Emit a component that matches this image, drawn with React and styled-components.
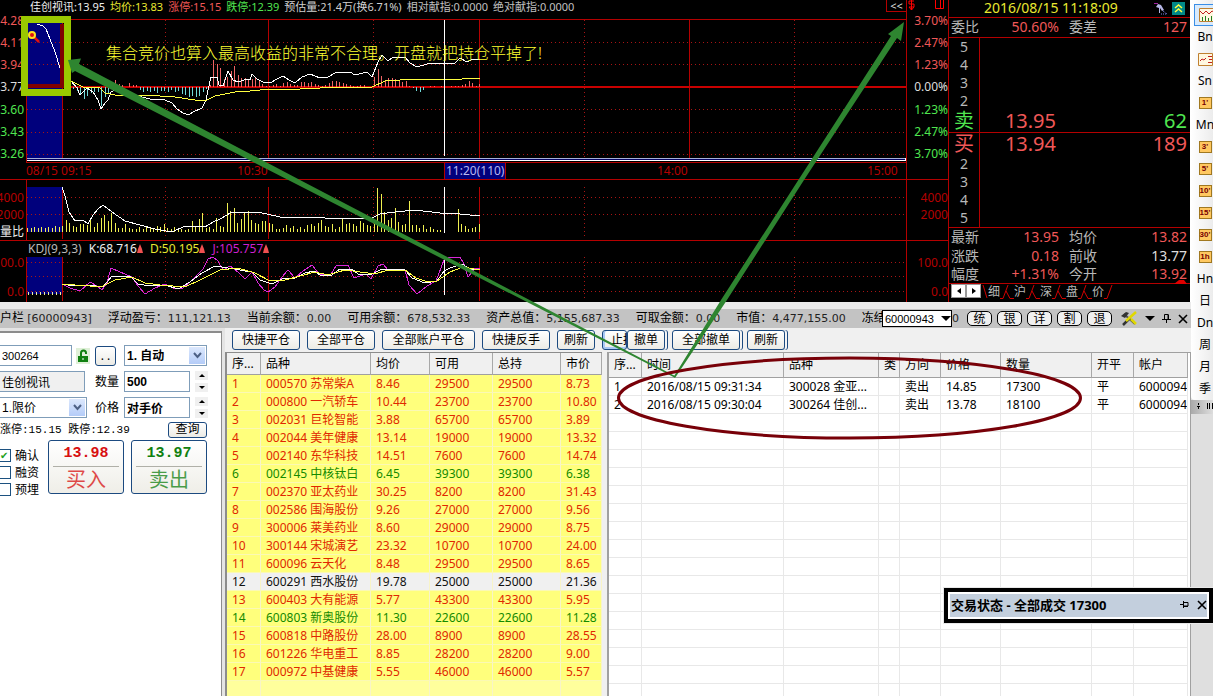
import React, { useState } from "react";
import styled, { createGlobalStyle } from "styled-components";

const GlobalStyle = createGlobalStyle`
  * { box-sizing: border-box; }
  body {
    margin: 0;
    overflow: hidden;
    background: #f0f0f0;
    font-family: "Noto Sans", "Noto Sans CJK SC", sans-serif;
    font-size: 12px;
    line-height: 16px;
    color: #000;
  }
  button, input, select {
    font-family: inherit;
    font-size: 12px;
    line-height: 16px;
    margin: 0;
    padding: 0;
    color: inherit;
    border-radius: 0;
  }
`;

const RED = "#b40000";
const PINK = "#f05858";
const GREEN = "#50e650";
const GREY = "#b8b8b8";

const Page = styled.div`
  position: relative;
  display: flex;
  height: 100vh;
  overflow: hidden;
`;
const Main = styled.main`
  flex: 1;
  min-width: 0;
  display: flex;
  flex-direction: column;
`;
const Top = styled.section`
  display: flex;
  height: 302px;
  flex: none;
  background: #000;
  border-right: 1px solid #fff;
`;

/* ---------- chart ---------- */
const Chart = styled.div`
  flex: 1;
  min-width: 0;
  display: flex;
  border-right: 1px solid ${RED};
`;
const Axis = styled.div`
  width: ${(p) => (p.$right ? 42 : 26)}px;
  flex: none;
  display: flex;
  flex-direction: column;
  border-left: ${(p) => (p.$right ? `1px solid ${RED}` : "none")};
`;
const AxisBlock = styled.div`
  height: ${(p) => p.$h}px;
  padding: ${(p) => p.$pad || "0"};
  border-bottom: ${(p) => (p.$last ? "none" : `1px solid ${RED}`)};
  display: flex;
  flex-direction: column;
  justify-content: ${(p) => (p.$spread ? "space-between" : "flex-start")};
  gap: ${(p) => p.$gap || 0}px;
  position: relative;
`;
const Tick = styled.span`
  display: flex;
  justify-content: flex-end;
  height: 16px;
  padding-right: ${(p) => (p.$right ? 0 : 2)}px;
  overflow: hidden;
  white-space: nowrap;
  color: ${(p) => p.$c || RED};
`;
const AxisTools = styled.svg`
  position: absolute;
  left: 0;
  top: 0;
`;
const Plot = styled.div`
  flex: 1;
  min-width: 0;
  display: flex;
  flex-direction: column;
`;
const PlotHead = styled.div`
  height: 19px;
  padding-left: 4px;
  display: flex;
  gap: 5px;
  font-size: 11px;
  line-height: 13px;
  white-space: nowrap;
`;
const Tint = styled.span`
  color: ${(p) => p.$c};
`;
const Collapse = styled.button`
  margin-left: auto;
  width: 20px;
  height: 12px;
  border: solid ${RED};
  border-width: 0 0 1px 1px;
  background: #000;
  color: #ddd;
  font-size: 11px;
  line-height: 11px;
`;
const Svg = styled.svg`
  display: block;
  width: 100%;
  height: ${(p) => p.$h}px;
  shape-rendering: crispEdges;
  fill: none;
`;
const TimeRow = styled.div`
  height: 17px;
  border-bottom: 1px solid ${RED};
  display: grid;
  grid-template-columns: 211fr 207fr 213fr 210fr 39fr;
  color: ${RED};
  white-space: nowrap;
`;
const Cursor = styled.span`
  justify-self: start;
  padding: 0 1px;
  background: #00007c;
  color: #b8b8f0;
  border: solid ${RED};
  border-width: 0 1px;
`;
const KdjHead = styled.div`
  height: 17px;
  border-top: 1px solid ${RED};
  padding-left: 2px;
  display: flex;
  gap: 7px;
  white-space: nowrap;
`;

/* ---------- quote ---------- */
const Quote = styled.aside`
  width: 241px;
  flex: none;
  color: ${GREY};
  font-size: 14px;
  line-height: 18px;
`;
const Clock = styled.div`
  height: 18px;
  padding-left: 35px;
  padding-right: 5px;
  border-bottom: 1px solid ${RED};
  display: flex;
  justify-content: space-between;
  color: #e8e830;
  line-height: 16px;
`;
const QuoteRow = styled.div`
  display: grid;
  grid-template-columns: 28px 80px 10px 28px 1fr;
  height: ${(p) => p.$h || 18}px;
  padding: 0 3px 0 2px;
  border-bottom: ${(p) => (p.$line ? `1px solid ${RED}` : "none")};
`;
const Num = styled.span`
  color: ${(p) => p.$c};
  text-align: right;
`;
const Book = styled.div`
  height: 95px;
  border-bottom: 1px solid ${RED};
  display: flex;
  flex-direction: column;
`;
const Level = styled.div`
  display: flex;
  flex: none;
  height: ${(p) => (p.$big ? 22 : 18)}px;
  line-height: ${(p) => (p.$big ? 22 : 18)}px;
  font-size: ${(p) => (p.$big ? 20 : 14)}px;
  padding-right: 3px;
`;
const LevelName = styled.span`
  width: 31px;
  border-right: 1px solid ${RED};
  text-align: center;
  color: ${(p) => p.$c || GREY};
`;
const LevelPrice = styled.span`
  width: 76px;
  text-align: right;
  color: ${PINK};
`;
const LevelVol = styled.span`
  margin-left: auto;
  color: ${(p) => p.$c};
`;
const Tabs = styled.div`
  display: flex;
  height: 17px;
  border-top: 1px solid ${RED};
  padding-left: 2px;
`;
const TabArrow = styled.button`
  display: flex;
  align-items: center;
  justify-content: center;
  width: 15px;
  height: 14px;
  border: 1px solid #999;
  background: #fff;
`;
const Tab = styled.button`
  display: flex;
  border: 0;
  background: none;
  color: ${GREY};
  line-height: 15px;
`;

/* ---------- side bar ---------- */
const Side = styled.nav`
  width: 22px;
  flex: none;
  overflow: hidden;
  background: #dfdfdf;
`;
const SideList = styled.div`
  background: linear-gradient(90deg, #fff, #ececec);
  padding-top: 4px;
  border-radius: 0 0 0 4px;
`;
const SideItem = styled.button`
  display: flex;
  align-items: center;
  justify-content: center;
  width: 28px;
  height: 22px;
  border: ${(p) => (p.$on ? "1px solid #3a8ee6" : "0")};
  background: ${(p) => (p.$on ? "#d8eafc" : "none")};
  margin-left: ${(p) => (p.$on ? 3 : 0)}px;
  font-size: 12px;
`;
const Period = styled.span`
  width: 13px;
  height: 12px;
  border: 1px solid #a07820;
  background: #ffc860;
  color: #700;
  font-family: "Liberation Sans", sans-serif;
  font-size: 8px;
  line-height: 10px;
  font-weight: bold;
  text-align: center;
`;
const Grip = styled.div`
  height: 14px;
  padding-left: 6px;
  background: linear-gradient(90deg, #aaa, #ddd);
  overflow: hidden;
`;

/* ---------- status bar ---------- */
const Status = styled.div`
  flex: none;
  display: flex;
  align-items: center;
  height: 26px;
  border-top: 7px solid #ebebeb;
  background: #c3c3c3;
  white-space: nowrap;
  padding-right: 3px;
`;
const Figures = styled.div`
  flex: 1;
  min-width: 0;
  overflow: hidden;
  display: flex;
  gap: 16px;
`;
const Fig = styled.span`
  font-family: "DejaVu Sans", sans-serif;
  font-size: 11px;
  color: #222;
`;
const AccountBox = styled.label`
  display: flex;
  width: 70px;
  height: 17px;
  border: 1px solid #000;
  background: #fff;
  align-items: center;
  margin-top: -1px;
`;
const PlainSelect = styled.select`
  appearance: none;
  flex: 1;
  min-width: 0;
  height: 100%;
  border: 0;
  background: none;
  padding-left: ${(p) => p.$pad || 2}px;
  font-family: "Liberation Sans", "Noto Sans CJK SC", sans-serif;
  font-size: ${(p) => p.$size || 12}px;
  font-weight: ${(p) => (p.$bold ? "bold" : "normal")};
`;
const Pills = styled.div`
  display: flex;
  gap: 5px;
  margin: 0 9px 0 8px;
`;
const Pill = styled.button`
  width: 25px;
  height: 15px;
  border: 1px solid #000;
  border-radius: 5px;
  background: #f0f0f0;
  line-height: 12px;
`;
const IconBtn = styled.button`
  display: flex;
  border: 0;
  background: none;
`;
const IconRow = styled.div`
  display: flex;
  align-items: center;
  gap: ${(p) => p.$gap || 8}px;
`;

/* ---------- workspace ---------- */
const Work = styled.section`
  flex: 1;
  min-height: 0;
  display: flex;
`;
const FormWrap = styled.form`
  width: 225px;
  flex: none;
  padding: 3px 3px 0 0;
  background: #e4e4e4;
`;
const FormPane = styled.div`
  height: 100%;
  background: #fff;
  border: solid #8c8c8c;
  border-width: 2px 1px 0 0;
  padding-top: 12px;
  display: flex;
  flex-direction: column;
  gap: 5px;
`;
const FormRow = styled.div`
  display: grid;
  grid-template-columns: 90px 24px 84px;
  gap: 5px;
  height: 21px;
  align-items: center;
`;
const Cell = styled.div`
  display: flex;
  align-items: center;
  gap: ${(p) => p.$gap || 4}px;
`;
const Field = styled.input`
  width: ${(p) => p.$w}px;
  height: 21px;
  border: 1px solid #7f9db9;
  border-left-width: ${(p) => (p.$cut ? 0 : 1)}px;
  background: ${(p) => (p.readOnly ? "#f0f0f0" : "#fff")};
  padding-left: 2px;
  font-family: "Liberation Sans", "Noto Sans CJK SC", sans-serif;
  font-size: ${(p) => p.$size || 12}px;
  font-weight: ${(p) => (p.$bold ? "bold" : "normal")};
`;
const ComboBox = styled.div`
  display: flex;
  align-items: center;
  width: ${(p) => p.$w}px;
  height: 21px;
  border: 1px solid #7f9db9;
  border-left-width: ${(p) => (p.$cut ? 0 : 1)}px;
  padding-right: 1px;
  background: #fff;
`;
const ComboArrow = styled.span`
  display: flex;
  align-items: center;
  justify-content: center;
  width: 16px;
  height: 17px;
  background: linear-gradient(#dce8fd, #b4ccf8);
  pointer-events: none;
`;
const Spinner = styled.div`
  display: flex;
  flex-direction: column;
  gap: 3px;
`;
const SpinBtn = styled.button`
  display: flex;
  align-items: center;
  justify-content: center;
  width: 13px;
  height: 9px;
  border: 0;
  background: #f0f0f0;
`;
const XpButton = styled.button`
  height: ${(p) => p.$h || 20}px;
  width: ${(p) => p.$w}px;
  flex: none;
  border: 1px solid #1c4a80;
  border-radius: 3px;
  background: linear-gradient(#fff, #ecebe5);
  line-height: 14px;
  white-space: nowrap;
  overflow: hidden;
  box-shadow: ${(p) =>
    p.$double ? "2px 0 0 #f4f4f4, 3px 0 0 #1c4a80" : p.$hot ? "inset 2px 0 0 #a8c8f4, inset 0 -2px 0 #a8c8f4" : "none"};
  text-align: ${(p) => (p.$hot ? "left" : "center")};
  padding-left: ${(p) => (p.$hot ? 8 : 0)}px;
`;
const LockBtn = styled.button`
  display: flex;
  width: 14px;
  height: 16px;
  border: 0;
  background: #dff0d8;
`;
const LimitRow = styled.div`
  display: flex;
  justify-content: space-between;
  align-items: center;
  width: 207px;
  height: 14px;
  white-space: nowrap;
  font-family: "Liberation Mono", "Noto Sans CJK SC", monospace;
  font-size: 11px;
`;
const DealRow = styled.div`
  display: flex;
  gap: 7px;
  margin-top: -2px;
`;
const Checks = styled.div`
  width: 41px;
  padding-top: 7px;
`;
const Check = styled.label`
  display: flex;
  align-items: center;
  gap: 4px;
  height: 17px;
  white-space: nowrap;
`;
const Tickbox = styled.input`
  appearance: none;
  width: 11px;
  height: 13px;
  border: 1px solid #1c5180;
  border-left: 0;
  background: #fff;
  &:checked::before {
    content: "✔";
    display: block;
    color: #21a121;
    font-size: 10px;
    line-height: 11px;
  }
`;
const Deal = styled.button`
  width: 76px;
  height: 54px;
  border: 1px solid #1c4a80;
  border-radius: 3px;
  background: linear-gradient(#fff, #efeee8);
  color: ${(p) => p.$c};
  padding: 0 4px;
`;
const DealPrice = styled.div`
  height: 26px;
  border-bottom: 1px solid #b0b0a8;
  font: bold 15px/26px "Liberation Mono", monospace;
`;
const DealName = styled.div`
  font-size: 20px;
  line-height: 26px;
  opacity: 0.75;
`;

const Right = styled.div`
  flex: 1;
  min-width: 0;
  display: flex;
  flex-direction: column;
  background: #f0f0f0;
`;
const Toolbar = styled.div`
  display: flex;
  flex: none;
  align-items: center;
  gap: 7px;
  height: 24px;
  padding-left: 7px;
`;
const Cancels = styled.div`
  display: flex;
  gap: 7px;
`;
const Joined = styled.div`
  display: flex;
`;
const Tables = styled.div`
  flex: 1;
  min-height: 0;
  display: flex;
`;
const HoldPane = styled.div`
  width: 377px;
  flex: none;
  overflow: hidden;
  border: solid #8c8c8c;
  border-width: 1px 0 0 2px;
  background: #ffff9c;
`;
const TradePane = styled.div`
  flex: 1;
  min-width: 0;
  overflow: hidden;
  margin-left: 5px;
  border: solid #a0a0a0;
  border-width: 1px 1px 0 2px;
  background: #fff;
  padding-right: 2px;
`;
const Table = styled.table`
  width: 100%;
  table-layout: fixed;
  border-spacing: 0;
  border-collapse: separate;
  text-align: left;
`;
const Th = styled.th`
  width: ${(p) => (p.$w ? `${p.$w}px` : "auto")};
  height: ${(p) => p.$h}px;
  padding: 0 0 0 5px;
  font-weight: normal;
  line-height: 18px;
  background: #f0f0f0;
  border-right: 1px solid #a8a8a8;
  border-bottom: 1px solid #a0a0a0;
  white-space: nowrap;
`;
const HoldTr = styled.tr`
  color: ${(p) => p.$c};
  background: ${(p) => p.$bg};
`;
const Td = styled.td`
  height: 18px;
  padding: 0 0 0 5px;
  line-height: 17px;
  white-space: nowrap;
  overflow: hidden;
  border-right: 1px solid ${(p) => (p.$light ? "#e8e8e8" : "#f8f4c8")};
  border-bottom: 1px solid ${(p) => (p.$light ? "#e8e8e8" : "#fbf9b4")};
`;

/* ---------- overlays ---------- */
const Marks = styled.svg`
  position: absolute;
  left: 0;
  top: 0;
  pointer-events: none;
`;
const Note = styled.div`
  position: absolute;
  left: 106px;
  top: 42px;
  color: #ffff30;
  font-size: 16px;
  font-weight: 300;
  line-height: 22px;
  white-space: nowrap;
`;
const Popup = styled.div`
  position: absolute;
  right: 0;
  top: 588px;
  width: 269px;
  height: 35px;
  border: 4px solid #000;
  box-shadow: 0 1px 0 #888;
  outline: 1px solid #e8e8e8;
  background: #fff;
  padding: 2px;
`;
const PopupBar = styled.div`
  height: 100%;
  padding: 0 0 2px 1px;
  display: flex;
  align-items: center;
  justify-content: space-between;
  background: #c3cfdd;
  font-size: 13px;
  font-weight: bold;
`;

const pct = [
  ["3.70%", PINK],
  ["2.47%", PINK],
  ["1.23%", PINK],
  ["0.00%", "#ddd"],
  ["1.23%", GREEN],
  ["2.47%", GREEN],
  ["3.70%", GREEN],
];
const prices = ["4.28", "4.11", "3.94", "3.77", "3.60", "3.43", "3.26"];

const dotted = [165.5, 373.5, 584.5, 794.5];
const solid = [62.5, 268.5, 479.5];

// deviation bars around the zero line, one every 3.5px from x = 73
const bars = [
  -2, -4, -8, -12, -9, -6, -5, -5, -19, -10, -7, 4, 7, 3, 2, 0, 4, 2, 2, -3, -5, -4, -5, -4, -6,
  -4, -4, -5, -3, -5, -4, -7, -8, -10, -9, -10, -9, -5, -2, 2, 27, 23, 19, 8, 10, 16, 21, 12, 9, 9,
  7, 8, 10, 6, 3, 1, 1, 2, 3, 1, 4, 5, 3, 2, 2, 5, 5, 4, 5, 3, 2, 1, 2, 4, 6, 6, 5, 4, 3, 2, 1, 1, 2,
  2, 0, -1, 10, 18, 11, 7, 9, 9, 8, 7, 5, 6, 1, -1, -4, -5, -3, 0, 1, 1, 0, 1, 0, 0, 1, 1, 1, 2, 3,
  6, 4, 1, 3,
];
// volume bars, one every 3.5px from x = 27
const vols = [
  4, 4, 5, 4, 5, 4, 5, 4, 6, 5, 6, 12, 9, 6, 5, 8, 8, 7, 12, 5, 9, 14, 17, 11, 19, 9, 4, 4, 8, 4, 3,
  3, 5, 3, 6, 4, 3, 6, 5, 8, 4, 3, 5, 3, 3, 2, 3, 11, 6, 13, 19, 4, 5, 3, 14, 6, 5, 29, 21, 24, 9,
  13, 20, 21, 12, 9, 8, 11, 11, 9, 8, 3, 3, 4, 7, 4, 6, 3, 5, 3, 7, 8, 6, 9, 12, 6, 5, 8, 3, 5, 13,
  8, 9, 8, 6, 11, 9, 7, 6, 9, 44, 38, 20, 12, 14, 24, 10, 7, 8, 31, 7, 7, 4, 7, 3, 5, 3, 2, 2, 0, 0,
  0, 0, 23, 8, 6, 3, 4, 5, 8,
];

const priceLine =
  "71,81 77,88 80,95 87,88 93,92 98,100 101,109 105,103 108,100 111,92 118,88 130,94 150,99 165,100 172,103 177,109 183,113 189,115 193,112 202,108 206,100 208,90 211,77 217,77 219,85 223,86 228,71 233,80 238,82 247,79 250,80 252,74 257,79 263,82 270,83 277,79 283,76 289,80 295,83 302,77 310,74 320,78 328,77 337,72 350,72 355,75 367,72 372,77 378,62 382,55 388,61 393,57 405,57 410,63 417,67 427,64 435,63 455,63 460,58 467,62 473,59 480,59";
const avgLine =
  "71,81 83,87 100,88 105,93 115,95 145,95 175,97 195,100 207,100 215,96 235,92 250,91 270,89 300,89 340,87 372,87 385,81 400,80 420,79 444,80 480,78";
const volLine =
  "62,187 65,196 69,212 75,221 83,220 88,224 93,215 98,209 103,205 112,212 125,221 140,225 155,229 172,232 185,226 205,227 213,222 220,219 232,212 262,213 285,218 305,217 345,219 372,218 380,214 395,212 415,210 440,213 460,214 480,216";
const kLine =
  "62,284 75,286 88,285 103,287 112,276 130,276 138,284 150,286 165,285 178,289 190,282 202,273 215,266 235,269 245,271 252,272 260,280 272,284 284,278 295,278 305,273 314,271 320,275 332,275 340,269 352,269 358,274 372,274 382,269 405,270 412,278 425,283 437,281 444,271 450,268 462,264 472,270 480,269";
const dLine =
  "62,284 75,285 90,286 103,286 115,280 132,277 145,283 160,285 185,287 200,280 220,270 238,268 255,273 270,281 285,280 300,276 315,272 328,275 345,270 360,272 375,274 388,270 405,270 416,278 428,282 437,281 450,272 463,267 480,270";
const jLine =
  "62,284 70,288 80,291 90,282 97,286 102,290 107,283 111,268 120,272 132,277 138,286 145,294 155,288 165,284 175,289 183,288 192,280 203,269 208,259 213,257 218,261 223,270 230,266 238,272 245,279 252,272 258,283 264,290 268,292 275,287 282,277 288,270 295,278 303,271 312,265 319,274 330,276 336,266 348,265 354,278 366,274 371,279 378,266 383,264 388,270 405,270 409,285 417,294 427,286 436,281 444,260 450,257 460,257 464,264 468,277 475,268 480,269";

const holdings = [
  ["000570 苏常柴A", "8.46", "29500", "8.73"],
  ["000800 一汽轿车", "10.44", "23700", "10.80"],
  ["002031 巨轮智能", "3.88", "65700", "3.89"],
  ["002044 美年健康", "13.14", "19000", "13.32"],
  ["002140 东华科技", "14.51", "7600", "14.74"],
  ["002145 中核钛白", "6.45", "39300", "6.38"],
  ["002370 亚太药业", "30.25", "8200", "31.43"],
  ["002586 围海股份", "9.26", "27000", "9.56"],
  ["300006 莱美药业", "8.60", "29000", "8.75"],
  ["300144 宋城演艺", "23.32", "10700", "24.00"],
  ["600096 云天化", "8.48", "29500", "8.65"],
  ["600291 西水股份", "19.78", "25000", "21.36"],
  ["600403 大有能源", "5.77", "43300", "5.95"],
  ["600803 新奥股份", "11.30", "22600", "11.28"],
  ["600818 中路股份", "28.00", "8900", "28.55"],
  ["601226 华电重工", "8.85", "28200", "9.00"],
  ["000972 中基健康", "5.55", "46000", "5.57"],
];
const trades = [
  ["1", "2016/08/15 09:31:34", "300028 金亚...", "", "卖出", "14.85", "17300", "平", "6000094"],
  ["2", "2016/08/15 09:30:04", "300264 佳创...", "", "卖出", "13.78", "18100", "平", "6000094"],
];
const holdCols = [["序...", 34], ["品种", 110], ["均价", 59], ["可用", 63], ["总持", 68], ["市价"]];
const tradeCols = [
  ["序...", 33], ["时间", 142], ["品种", 95], ["类", 21], ["方向", 41],
  ["价格", 60], ["数量", 91], ["开平", 42], ["帐户"],
];
const figures = [
  ["浮动盈亏", "111,121.13"],
  ["当前余额", "0.00"],
  ["可用余额", "678,532.33"],
  ["资产总值", "5,155,687.33"],
  ["可取金额", "0.00"],
  ["市值", "4,477,155.00"],
  ["冻结金额", "0.00"],
];
const side = ["Bn", "@quote", "Sn", "#1'", "Mn", "#3'", "#5'", "#10'", "#15'", "#30'", "#1h", "Hn", "日", "Dn", "周", "月", "季"];

const Grid = ({ ys, top, bottom }) => (
  <>
    <g stroke="#a81414" strokeDasharray="1 3">
      {ys.map((y) => <path key={y} d={`M27 ${y}H906`} />)}
      {dotted.map((x) => <path key={x} d={`M${x} ${top}V${bottom}`} />)}
    </g>
    {solid.map((x) => <path key={x} stroke={RED} d={`M${x} ${top}V${bottom}`} />)}
    <path stroke={RED} d="M26.5 0V302" />
  </>
);

const Arrow = ({ up, size = 5, color = "#000" }) => (
  <svg width={size * 2} height={size} viewBox="0 0 10 5" fill={color}>
    <path d={up ? "M5 0l5 5H0z" : "M0 0h10L5 5z"} />
  </svg>
);

const Chevron = () => (
  <ComboArrow>
    <svg width="9" height="7" viewBox="0 0 9 7" fill="none" stroke="#4d6185" strokeWidth="2">
      <path d="M1 1l3.500 4L8 1" />
    </svg>
  </ComboArrow>
);

const Spin = () => (
  <Spinner>
    <SpinBtn type="button" aria-label="up"><Arrow up size={3} /></SpinBtn>
    <SpinBtn type="button" aria-label="down"><Arrow size={3} /></SpinBtn>
  </Spinner>
);

const Pin = ({ lying }) => (
  <svg width="9" height="9" viewBox="0 0 9 9" fill="none" stroke="#000">
    {lying ? (
      <path d="M0 4.500h3M3.500 1v7M3.500 2.500H8V6H3.500M3.500 6.500H8" />
    ) : (
      <path d="M2.500 5V.5H6V5M6.500 .5V5M0 5.500h9M4.500 5.500V9" />
    )}
  </svg>
);

const Cross = () => (
  <svg width="10" height="10" viewBox="0 0 10 10" stroke="#000" strokeWidth="1.600">
    <path d="M1 1l8 8M9 1L1 9" />
  </svg>
);

const Rise = () => (
  <svg width="6" height="9" viewBox="0 0 6 9" fill="#f05050">
    <path d="M3 0l2 5 1 4H0l1-4z" />
  </svg>
);

const ChartPanel = () => (
  <Chart>
    <Axis>
      <AxisBlock $h={180} $pad="13px 0 17px" $spread>
        {prices.map((p, i) => <Tick key={p} $c={pct[i][1]}>{p}</Tick>)}
      </AxisBlock>
      <AxisBlock $h={61} $pad="10px 0 0" $gap={1}>
        <Tick>4000</Tick>
        <Tick>2000</Tick>
        <Tick $c="#eee">量比</Tick>
      </AxisBlock>
      <AxisBlock $h={61} $pad="14px 0 0" $gap={13} $last>
        <Tick>00.0</Tick>
        <Tick>0.0</Tick>
      </AxisBlock>
    </Axis>
    <Plot>
      <PlotHead>
        <Tint $c="#eee">佳创视讯:13.95</Tint>
        <Tint $c="#e8e830">均价:13.83</Tint>
        <Tint $c={PINK}>涨停:15.15</Tint>
        <Tint $c={GREEN}>跌停:12.39</Tint>
        <Tint $c="#d0d0d0">预估量:21.4万(换6.71%)</Tint>
        <Tint $c="#c0c0c0">相对献指:0.0000</Tint>
        <Tint $c="#c0c0c0">绝对献指:0.0000</Tint>
        <Collapse>&lt;&lt;</Collapse>
      </PlotHead>
      <Svg $h={144} viewBox="26 19 880 144" preserveAspectRatio="none">
        <rect x="27" y="20" width="35" height="138" fill="#00007c" />
        <Grid ys={[42.5, 64.5, 109.5, 132.5, 154.5]} top={20} bottom={158} />
        <path stroke={RED} d="M689.5 20V158M26 19.500H906M26 162.500H906" />
        <path stroke="#c80000" strokeWidth="2" d="M62 87H906" />
        <path stroke="#a8b0d8" d="M27 158.500H905" />
        <path stroke="#000060" d="M27 159.500H905" />
        <path stroke="#fff" d="M27 160.500H905.500V158" />
        {bars.map((b, i) => (
          <path key={i} stroke={b > 0 ? "#f06464" : "#70d8d8"} d={`M${Math.round(73 + i * 3.5) + 0.5} 87v${-b}`} />
        ))}
        <polyline stroke="#fff" points="37,24 43,26 46,29 50,39 55,52 60,68" />
        <polyline stroke="#fff" points={priceLine} />
        <polyline stroke="#ffff40" points={avgLine} />
        <path stroke="#fff" d="M444.500 20V156" />
      </Svg>
      <TimeRow>
        <span>08/15 09:15</span>
        <span>10:30</span>
        <Cursor>11:20(110)</Cursor>
        <span>14:00</span>
        <span>15:00</span>
      </TimeRow>
      <Svg $h={60} viewBox="26 180 880 60" preserveAspectRatio="none">
        <rect x="27" y="187" width="35" height="45" fill="#00007c" />
        <Grid ys={[197.5, 214.5]} top={187} bottom={239} />
        {vols.map((v, i) => (
          <path key={i} stroke="#f0f050" d={`M${Math.round(27 + i * 3.5) + 0.5} 232v${-v}`} />
        ))}
        <polyline stroke="#fff" points={volLine} />
        <path stroke="#fff" d="M444.500 187V233" />
      </Svg>
      <KdjHead>
        <Tint $c={GREY}>KDJ(9,3,3)</Tint>
        <Tint $c="#eee">K:68.716<Rise /></Tint>
        <Tint $c="#e8e830">D:50.195<Rise /></Tint>
        <Tint $c="#d020d0">J:105.757<Rise /></Tint>
      </KdjHead>
      <Svg $h={45} viewBox="26 257 880 45" preserveAspectRatio="none">
        <rect x="27" y="257" width="35" height="37" fill="#00007c" />
        <Grid ys={[262.5, 276.5, 291.5]} top={257} bottom={301} />
        <path stroke="#f0f0a0" strokeWidth="3" strokeDasharray="1 3" d="M28 293.500H61" />
        <path stroke="#fff" d="M444.500 257V295" />
        <polyline stroke="#d828d8" points={jLine} />
        <polyline stroke="#fff" points={kLine} />
        <polyline stroke="#ffff40" points={dLine} />
      </Svg>
    </Plot>
    <Axis $right>
      <AxisBlock $h={180} $pad="13px 0 17px" $spread>
        <AxisTools width="41" height="12" fill="none" stroke="#f00">
          <path d="M7 1H2v3h5v3H2M4.500 0v10M2 7l2.500 3L7 7" />
          <path d="M28.500 0v8.500h8V0M33.500 0v8" />
        </AxisTools>
        {pct.map(([t, c], i) => <Tick key={i} $right $c={c}>{t}</Tick>)}
      </AxisBlock>
      <AxisBlock $h={61} $pad="10px 0 0" $gap={1}>
        <Tick $right>4000</Tick>
        <Tick $right>2000</Tick>
      </AxisBlock>
      <AxisBlock $h={61} $pad="14px 0 0" $gap={13} $last>
        <Tick $right>100.0</Tick>
        <Tick $right>0.0</Tick>
      </AxisBlock>
    </Axis>
  </Chart>
);

const QuotePanel = () => (
  <Quote>
    <Clock>
      <span>2016/08/15 11:18:09</span>
      <IconRow $gap={4}>
        <svg width="15" height="14" viewBox="0 0 15 14" fill="none">
          <path d="M1 1.500h4" stroke="#a020a0" />
          <path d="M3 5l2-3 3 1 3 5-2 1-2-3v5H6V6z" fill="#b4b4e4" />
          <path d="M10 9l4 3M8 12h6" stroke="#8080e0" strokeDasharray="1 1" />
        </svg>
        <svg width="13" height="13" viewBox="0 0 13 13">
          <path fill="#008888" d="M0 0h13v13H0z" />
          <path d="M3 6l3.500-3L10 6M3 10l3.500-3 3.500 3" fill="none" stroke="#ffff40" strokeWidth="1.500" />
        </svg>
      </IconRow>
    </Clock>
    <QuoteRow $h={20} $line>
      <span>委比</span><Num $c={PINK}>50.60%</Num><span />
      <span>委差</span><Num $c={PINK}>127</Num>
    </QuoteRow>
    <Book>
      {[5, 4, 3, 2].map((n) => <Level key={n}><LevelName>{n}</LevelName></Level>)}
      <Level $big>
        <LevelName $c={GREEN}>卖</LevelName>
        <LevelPrice>13.95</LevelPrice>
        <LevelVol $c={GREEN}>62</LevelVol>
      </Level>
    </Book>
    <Book>
      <Level $big>
        <LevelName $c={PINK}>买</LevelName>
        <LevelPrice>13.94</LevelPrice>
        <LevelVol $c={PINK}>189</LevelVol>
      </Level>
      {[2, 3, 4, 5].map((n) => <Level key={n}><LevelName>{n}</LevelName></Level>)}
    </Book>
    <QuoteRow $h={19}>
      <span>最新</span><Num $c={PINK}>13.95</Num><span />
      <span>均价</span><Num $c={PINK}>13.82</Num>
    </QuoteRow>
    <QuoteRow>
      <span>涨跌</span><Num $c={PINK}>0.18</Num><span />
      <span>前收</span><Num $c="#ddd">13.77</Num>
    </QuoteRow>
    <QuoteRow>
      <span>幅度</span><Num $c={PINK}>+1.31%</Num><span />
      <span>今开</span><Num $c={PINK}>13.92</Num>
    </QuoteRow>
    <Tabs>
      <TabArrow aria-label="left">
        <svg width="4" height="6"><path d="M4 0v6L0 3z" /></svg>
      </TabArrow>
      <TabArrow aria-label="right">
        <svg width="4" height="6"><path d="M0 0v6l4-3z" /></svg>
      </TabArrow>
      <svg width="7" height="15" fill="none" stroke="#d00000"><path d="M2 1l4 13" /></svg>
      {["细", "沪", "深", "盘", "价"].map((t, i) => (
        <Tab key={t}>
          {t}
          <svg width="14" height="15" fill="none" stroke="#d00000">
            <path d={i < 4 ? "M0 14.500h3L8 1M6 7l4 7.500h4" : "M0 14.500h3L8 1"} />
          </svg>
        </Tab>
      ))}
    </Tabs>
  </Quote>
);

const StatusBar = () => (
  <Status>
    <Figures>
      <span>户栏 <Fig>[60000943]</Fig></span>
      {figures.map(([k, v]) => (
        <span key={k}>{k}：<Fig>{v}</Fig></span>
      ))}
    </Figures>
    <AccountBox>
      <PlainSelect $size={11} aria-label="account"><option>60000943</option></PlainSelect>
      <IconRow><Arrow /></IconRow>
    </AccountBox>
    <Fig>0</Fig>
    <Pills>
      {["统", "银", "详", "割", "退"].map((t) => <Pill key={t}>{t}</Pill>)}
    </Pills>
    <IconRow $gap={7}>
      <IconBtn aria-label="tools">
        <svg width="17" height="15" viewBox="0 0 17 15" fill="none">
          <path d="M3 3l11 10" stroke="#555" strokeWidth="2" />
          <path d="M0 5l5-4 3 1-4 5z" fill="#333" />
          <path d="M2 14L9 7" stroke="#333" strokeWidth="2.500" />
          <path d="M5 10L15 1M10 8l5 5" stroke="#e0d800" strokeWidth="2.500" />
        </svg>
      </IconBtn>
      <IconBtn aria-label="menu"><Arrow /></IconBtn>
      <IconBtn aria-label="pin"><Pin /></IconBtn>
      <IconBtn aria-label="close"><Cross /></IconBtn>
    </IconRow>
  </Status>
);

const OrderForm = () => {
  const [code, setCode] = useState("300264");
  const [qty, setQty] = useState("500");
  const [price, setPrice] = useState("对手价");
  return (
    <FormWrap onSubmit={(e) => e.preventDefault()}>
      <FormPane>
        <FormRow>
          <Cell>
            <Field $cut $w={72} $size={11} aria-label="code" value={code} onChange={(e) => setCode(e.target.value)} />
            <LockBtn type="button" aria-label="lock">
              <svg width="14" height="16" viewBox="0 0 14 16">
                <path d="M5 8V5a2.500 2.500 0 015 0v1" fill="none" stroke="#108010" strokeWidth="2" />
                <path d="M2 8h10v6H2z" fill="#108010" />
                <path d="M6.500 10h1v2h-1z" fill="#fff" />
              </svg>
            </LockBtn>
          </Cell>
          <XpButton type="button" $w={21}>. .</XpButton>
          <ComboBox $w={83}>
            <PlainSelect $bold aria-label="mode"><option>1. 自动</option></PlainSelect>
            <Chevron />
          </ComboBox>
        </FormRow>
        <FormRow>
          <Field $cut $w={85} readOnly aria-label="name" value="佳创视讯" />
          <label htmlFor="qty">数量</label>
          <Cell $gap={5}>
            <Field id="qty" $w={66} $bold value={qty} onChange={(e) => setQty(e.target.value)} />
            <Spin />
          </Cell>
        </FormRow>
        <FormRow>
          <ComboBox $cut $w={87}>
            <PlainSelect aria-label="type"><option>1.限价</option></PlainSelect>
            <Chevron />
          </ComboBox>
          <label htmlFor="price">价格</label>
          <Cell $gap={5}>
            <Field id="price" $w={66} $bold value={price} onChange={(e) => setPrice(e.target.value)} />
            <Spin />
          </Cell>
        </FormRow>
        <LimitRow>
          <span>涨停:15.15 跌停:12.39</span>
          <XpButton type="button" $w={39} $h={16}>查询</XpButton>
        </LimitRow>
        <DealRow>
          <Checks>
            <Check><Tickbox type="checkbox" defaultChecked />确认</Check>
            <Check><Tickbox type="checkbox" />融资</Check>
            <Check><Tickbox type="checkbox" />预埋</Check>
          </Checks>
          <Deal type="button" $c="#d81010">
            <DealPrice>13.98</DealPrice>
            <DealName>买入</DealName>
          </Deal>
          <Deal type="button" $c="#108010">
            <DealPrice>13.97</DealPrice>
            <DealName>卖出</DealName>
          </Deal>
        </DealRow>
      </FormPane>
    </FormWrap>
  );
};

const Holdings = () => (
  <HoldPane>
    <Table>
      <thead>
        <tr>{holdCols.map(([t, w]) => <Th key={t} $w={w} $h={22}>{t}</Th>)}</tr>
      </thead>
      <tbody>
        {holdings.map(([name, avg, amount, last], i) => {
          const selected = i === 11;
          const down = i === 5 || i === 13;
          return (
            <HoldTr key={name} $c={selected ? "#111" : down ? "#148a00" : "#e02800"} $bg={selected ? "#f0f0f0" : "#ffff7c"}>
              {[i + 1, name, avg, amount, amount, last].map((v, j) => <Td key={j}>{v}</Td>)}
            </HoldTr>
          );
        })}
        <tr>{holdCols.map(([t]) => <Td key={t} />)}</tr>
      </tbody>
    </Table>
  </HoldPane>
);

const Trades = () => (
  <TradePane>
    <Table>
      <thead>
        <tr>{tradeCols.map(([t, w]) => <Th key={t} $w={w} $h={25}>{t}</Th>)}</tr>
      </thead>
      <tbody>
        {trades.map((row) => (
          <tr key={row[0]}>{row.map((v, j) => <Td key={j} $light>{v}</Td>)}</tr>
        ))}
        {Array.from({ length: 18 }, (_, i) => (
          <tr key={i}>{tradeCols.map(([t]) => <Td key={t} $light />)}</tr>
        ))}
      </tbody>
    </Table>
  </TradePane>
);

const SideBar = () => (
  <Side>
    <SideList>
      <SideItem $on aria-label="chart">
        <svg width="18" height="14" viewBox="0 0 18 14" fill="none">
          <path d="M.5.500h17v13H.5z" fill="#fff8e0" stroke="#c08030" />
          <path d="M1 3l3 3 3-3 3 3 3-3 4 2" stroke="#c02020" />
          <path d="M3.500 13V9M6.500 13V8M9.500 13v-3M12.500 13V8M15.500 13V9" stroke="#208020" />
        </svg>
      </SideItem>
      {side.map((s) => (
        <SideItem key={s}>
          {s === "@quote" ? (
            <svg width="15" height="13" viewBox="0 0 15 13" fill="none">
              <path d="M.5.500h14v12H.5z" fill="#fff8e0" stroke="#c08030" />
              <path d="M2 8l2-2 2 1 2-2" stroke="#c02020" />
              <path d="M10 3.500h4M11 6.500h3M10 9.500h4" stroke="#c02020" />
            </svg>
          ) : s[0] === "#" ? (
            <Period>{s.slice(1)}</Period>
          ) : (
            s
          )}
        </SideItem>
      ))}
    </SideList>
    <Grip>
      <svg width="16" height="12" fill="none" stroke="#000">
        <path d="M1.500 3v2M1.500 7v2M0 6.500h3M10.500 3v6M12.500 3v6M15.500 3v6" />
      </svg>
    </Grip>
  </Side>
);

const App = () => (
  <Page>
    <GlobalStyle />
    <Main>
      <Top>
        <ChartPanel />
        <QuotePanel />
      </Top>
      <StatusBar />
      <Work>
        <OrderForm />
        <Right>
          <Toolbar>
            <XpButton $w={68}>快捷平仓</XpButton>
            <XpButton $w={68}>全部平仓</XpButton>
            <XpButton $w={93}>全部账户平仓</XpButton>
            <XpButton $w={68}>快捷反手</XpButton>
            <XpButton $w={38}>刷新</XpButton>
            <Cancels>
              <Joined>
                <XpButton $w={25} $hot>止损</XpButton>
                <XpButton $w={38} $double>撤单</XpButton>
              </Joined>
              <XpButton $w={68} $double>全部撤单</XpButton>
              <XpButton $w={38} $double>刷新</XpButton>
            </Cancels>
          </Toolbar>
          <Tables>
            <Holdings />
            <Trades />
          </Tables>
        </Right>
      </Work>
    </Main>
    <SideBar />
    <Popup role="dialog">
      <PopupBar>
        <span>交易状态 - 全部成交 17300</span>
        <IconRow>
          <IconBtn aria-label="pin"><Pin lying /></IconBtn>
          <IconBtn aria-label="close"><Cross /></IconBtn>
        </IconRow>
      </PopupBar>
    </Popup>
    <Marks width="1213" height="696" fill="none">
      <path d="M62 24V86H28" stroke="#800000" strokeWidth="4" />
      <rect x="24.500" y="19.500" width="43" height="73" stroke="#9ac800" strokeWidth="7" />
      <path d="M34 37l5 5" stroke="#e01010" strokeWidth="2.500" />
      <circle cx="32" cy="35" r="3" fill="#e01010" stroke="#ffe020" strokeWidth="2" />
      <path
        fill="#2e8530"
        d="M68 60l13-1.500-2 5.500L300 180l376 196.500-1.500 1L300 186 75 71l-3 2zM904 22l-3 19-4-3-93 142-79 123-50 75-1.500-1L721 300l78-121L891 36l-3-2z"
      />
      <ellipse cx="849.500" cy="398" rx="231" ry="40" stroke="#780008" strokeWidth="3" />
      <path d="M1174 284l5-4h5l3 4z" fill="#e00000" />
    </Marks>
    <Note>集合竞价也算入最高收益的非常不合理。开盘就把持仓平掉了!</Note>
  </Page>
);

export default App;
